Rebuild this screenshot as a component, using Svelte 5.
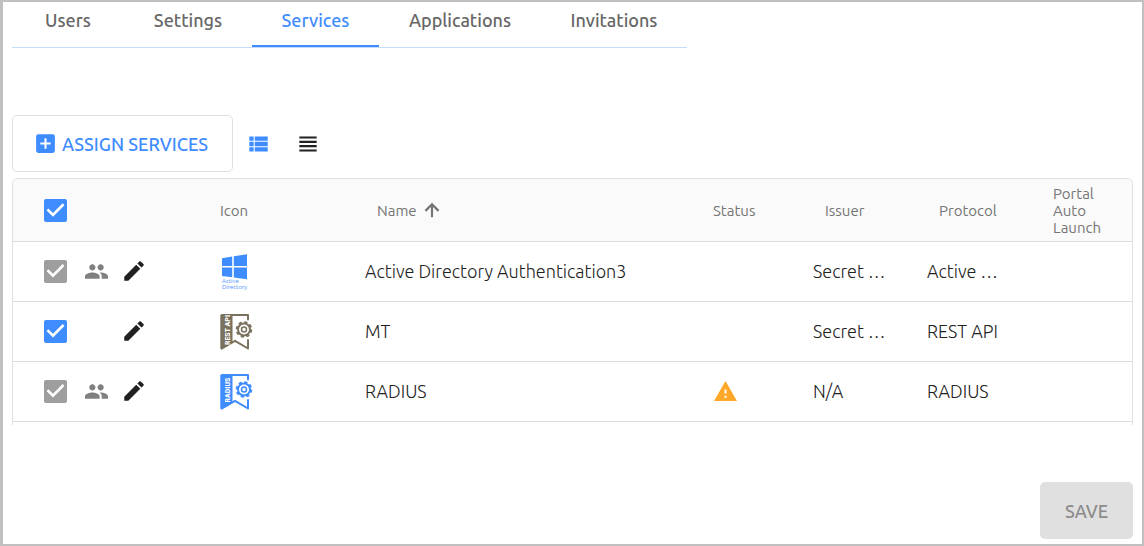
<script lang="ts">
    interface Service {
        name: string;
        logo: string;
        label: string;
        assigned: boolean;
        inherited: boolean;
        warning: boolean;
        issuer: string;
        protocol: string;
    }

    let tabs = ['Users', 'Settings', 'Services', 'Applications', 'Invitations'];
    let active_tab = 'Services';
    let compact = false;

    let services: Service[] = [
        { name: 'Active Directory Authentication3', logo: 'windows', label: '', assigned: true, inherited: true, warning: false, issuer: 'Secret …', protocol: 'Active …' },
        { name: 'MT', logo: 'brown', label: 'REST API', assigned: true, inherited: false, warning: false, issuer: 'Secret …', protocol: 'REST API' },
        { name: 'RADIUS', logo: 'blue', label: 'RADIUS', assigned: true, inherited: true, warning: true, issuer: 'N/A', protocol: 'RADIUS' }
    ];

    $: all_assigned = services.every((service) => service.assigned);

    // Inherited services stay assigned, the others follow the header box
    function toggleAll() {
        const next = !all_assigned;
        services = services.map((service) => service.inherited ? service : { ...service, assigned: next });
    }
</script>

<div class="page">
    <nav class="tabs">
        {#each tabs as tab}
            <button class="tab" class:active={tab === active_tab} on:click={() => (active_tab = tab)}>{tab}</button>
        {/each}
    </nav>

    <div class="toolbar">
        <button class="assign">
            <svg viewBox="0 0 24 24" width="25" height="25"><path d="M19 3H5a2 2 0 0 0-2 2v14a2 2 0 0 0 2 2h14a2 2 0 0 0 2-2V5a2 2 0 0 0-2-2zm-2 10h-4v4h-2v-4H7v-2h4V7h2v4h4v2z" /></svg>
            ASSIGN SERVICES
        </button>
        <button class="view blue" aria-label="List view" on:click={() => (compact = false)}>
            <svg viewBox="0 0 24 24" width="26" height="26"><path d="M4 14h4v-4H4v4zm0 5h4v-4H4v4zM4 9h4V5H4v4zm5 5h12v-4H9v4zm0 5h12v-4H9v4zM9 5v4h12V5H9z" /></svg>
        </button>
        <button class="view" aria-label="Compact view" on:click={() => (compact = true)}>
            <svg viewBox="0 0 24 24" width="26" height="26"><path d="M4 15h16v-2H4v2zm0 4h16v-2H4v2zm0-8h16V9H4v2zm0-6v2h16V5H4z" /></svg>
        </button>
    </div>

    <div class="grid">
        <table class:compact>
            <colgroup>
                <col class="c-select" />
                <col class="c-icon" />
                <col />
                <col class="c-status" />
                <col class="c-issuer" />
                <col class="c-issuer" />
                <col class="c-portal" />
            </colgroup>
            <thead>
                <tr>
                    <th class="select"><input type="checkbox" aria-label="Select all services" checked={all_assigned} on:change={toggleAll} /></th>
                    <th>Icon</th>
                    <th class="indent">
                        <span class="sort">
                            Name
                            <svg viewBox="0 0 24 24" width="22" height="22"><path d="M4 12l1.800 1.800 5-5V20h2.400V8.800l5 5L20 12l-8-8-8 8z" /></svg>
                        </span>
                    </th>
                    <th>Status</th>
                    <th class="indent">Issuer</th>
                    <th class="indent">Protocol</th>
                    <th class="indent">Portal Auto Launch</th>
                </tr>
            </thead>
            <tbody>
                {#each services as service}
                    <tr>
                        <td class="select">
                            <div class="actions">
                                <input type="checkbox" aria-label={`Assign ${service.name}`} bind:checked={service.assigned} disabled={service.inherited} />
                                <span class="group">
                                    {#if service.inherited}
                                        <svg viewBox="0 0 24 24" width="25" height="25"><path d="M16 11c1.660 0 2.990-1.340 2.990-3S17.660 5 16 5s-3 1.340-3 3 1.340 3 3 3zm-8 0c1.660 0 2.990-1.340 2.990-3S9.660 5 8 5 5 6.340 5 8s1.340 3 3 3zm0 2c-2.330 0-7 1.170-7 3.500V19h14v-2.500c0-2.330-4.670-3.500-7-3.500zm8 0c-.290 0-.620.020-.970.050 1.160.840 1.970 1.970 1.970 3.450V19h6v-2.500c0-2.330-4.670-3.500-7-3.500z" /></svg>
                                    {/if}
                                </span>
                                <button class="edit" aria-label={`Edit ${service.name}`}>
                                    <svg viewBox="0 0 24 24" width="26" height="26"><path d="M3 17.250V21h3.750L17.810 9.940l-3.750-3.750L3 17.250zM20.710 7.040a1 1 0 0 0 0-1.410l-2.340-2.340a1 1 0 0 0-1.410 0l-1.830 1.830 3.750 3.750 1.830-1.830z" /></svg>
                                </button>
                            </div>
                        </td>
                        <td>
                            {#if service.logo === 'windows'}
                                <svg class="logo blue" viewBox="0 0 34 40" width="34" height="40">
                                    <path d="M2 7.200L12.200 5.600V15H2zM13.800 5.300L27 3.300V15H13.800zM2 16.500H12.200V26.200L2 25zM13.800 16.500H27V28.200L13.800 26.400z" />
                                    <text x="2" y="32">Active</text>
                                    <text x="2" y="38">Directory</text>
                                </svg>
                            {:else}
                                <svg class="logo {service.logo}" viewBox="0 0 34 40" width="34" height="40">
                                    <path d="M2 3H12.500V31L1.500 38.500L.300 37.500V4.500Q.500 3 2 3z" />
                                    <path class="line" d="M12 4H28V8.500M28 29V37.500L15 29.800L2 37.500" />
                                    <circle class="line" cx="24" cy="18.500" r="6" />
                                    <circle class="teeth" cx="24" cy="18.500" r="7.300" />
                                    <circle class="line thin" cx="24" cy="18.500" r="2.500" />
                                    <text class="side" transform="translate(9.500 19) rotate(-90)">{service.label}</text>
                                </svg>
                            {/if}
                        </td>
                        <td>{service.name}</td>
                        <td>
                            {#if service.warning}
                                <svg class="warning" viewBox="0 0 24 24" width="25" height="25" role="img" aria-label="Warning"><path d="M1 21h22L12 2 1 21zm12-3h-2v-2h2v2zm0-4h-2v-4h2v4z" /></svg>
                            {/if}
                        </td>
                        <td>{service.issuer}</td>
                        <td>{service.protocol}</td>
                        <td></td>
                    </tr>
                {/each}
            </tbody>
        </table>
    </div>

    <div class="footer">
        <button class="save" disabled>SAVE</button>
    </div>
</div>

<style>
    :global(body) {
        margin: 0;
    }

    .page {
        box-sizing: border-box;
        min-height: 100vh;
        padding: 0 9px 5px;
        border: 2px solid #c0c0c0;
        border-left-width: 3px;
        background: #fff;
        color: #212121;
        font-family: Ubuntu, 'Noto Sans', sans-serif;
        font-size: 18px;
        display: flex;
        flex-direction: column;
    }

    button {
        border: 0;
        padding: 0;
        background: none;
        color: inherit;
        font: inherit;
        cursor: pointer;
    }

    svg {
        display: block;
        fill: currentColor;
    }

    .blue {
        color: #3f8cff;
    }

    .brown {
        color: #7a715f;
    }

    /* Tabs */
    .tabs {
        display: grid;
        grid-template-columns: 112px 128px 127px 162px 146px;
        align-self: flex-start;
        border-bottom: 1px solid #c5dcfa;
    }

    .tab {
        height: 45px;
        padding-bottom: 8px;
        border-bottom: 2px solid transparent;
        color: #666;
        font-weight: 500;
    }

    .tab.active {
        color: #3f8cff;
        border-color: #3f8cff;
    }

    /* Toolbar */
    .toolbar {
        display: flex;
        align-items: center;
        gap: 24px;
        margin-top: 67px;
    }

    .assign {
        display: flex;
        align-items: center;
        justify-content: center;
        gap: 4px;
        box-sizing: border-box;
        width: 221px;
        height: 57px;
        margin-right: -12px;
        padding-right: 4px;
        border: 1px solid #e0e0e0;
        border-radius: 5px;
        color: #3f8cff;
        font-weight: 500;
        white-space: nowrap;
    }

    /* Services table */
    .grid {
        margin-top: 6px;
        padding-bottom: 3px;
        border: 1px solid #e0e0e0;
        border-bottom: 0;
        border-radius: 6px 6px 0 0;
        overflow: hidden;
    }

    table {
        width: 100%;
        table-layout: fixed;
        border-collapse: collapse;
    }

    .c-select {
        width: 195px;
    }

    .c-icon {
        width: 145px;
    }

    .c-status {
        width: 100px;
    }

    .c-issuer {
        width: 114px;
    }

    .c-portal {
        width: 103px;
    }

    th,
    td {
        box-sizing: border-box;
        padding: 0 12px;
        border-bottom: 1px solid #dcdcdc;
        text-align: left;
        vertical-align: middle;
    }

    th {
        height: 62px;
        padding-top: 1px;
        background: #fafafa;
        color: #757575;
        font-size: 15px;
        font-weight: 400;
        line-height: 17px;
    }

    td {
        height: 60px;
        font-weight: 300;
        white-space: nowrap;
    }

    .compact td {
        height: 44px;
    }

    .indent {
        padding-left: 24px;
        padding-right: 24px;
    }

    .select {
        padding-left: 31px;
    }

    .sort,
    .actions {
        display: flex;
        align-items: center;
    }

    .sort {
        gap: 4px;
    }

    input[type='checkbox'] {
        appearance: none;
        display: block;
        width: 23px;
        height: 23px;
        margin: 0;
        border: 2px solid #757575;
        border-radius: 2px;
    }

    input[type='checkbox']:checked {
        border: 0;
        background: #3f8cff;
    }

    input[type='checkbox']:checked:disabled {
        background: #9e9e9e;
    }

    input[type='checkbox']:checked::before {
        content: '';
        display: block;
        height: 100%;
        background: #fff;
        clip-path: polygon(39% 78%, 11% 50%, 19% 42%, 39% 62%, 81% 20%, 89% 28%);
    }

    .group {
        width: 25px;
        margin: 0 12px 0 17px;
        color: #808080;
    }

    .warning {
        color: #ffa726;
    }

    .logo text {
        font-size: 6px;
        font-weight: 400;
    }

    .logo .side {
        fill: #fff;
        font-family: 'Ubuntu Condensed', 'Roboto Condensed', 'Liberation Sans Narrow', Ubuntu, sans-serif;
        font-size: 8px;
        font-weight: 700;
        text-anchor: middle;
    }

    .line {
        fill: none;
        stroke: currentColor;
        stroke-width: 2;
        stroke-linejoin: round;
        stroke-linecap: round;
    }

    .thin {
        stroke-width: 1.500;
    }

    .teeth {
        fill: none;
        stroke: currentColor;
        stroke-width: 2;
        stroke-dasharray: 3.200 2.533;
    }

    /* Footer */
    .footer {
        display: flex;
        justify-content: flex-end;
        margin-top: auto;
    }

    .save {
        width: 93px;
        height: 57px;
        border-radius: 5px;
        background: #e0e0e0;
        color: #8c8c8c;
        font-weight: 500;
        cursor: default;
    }
</style>
